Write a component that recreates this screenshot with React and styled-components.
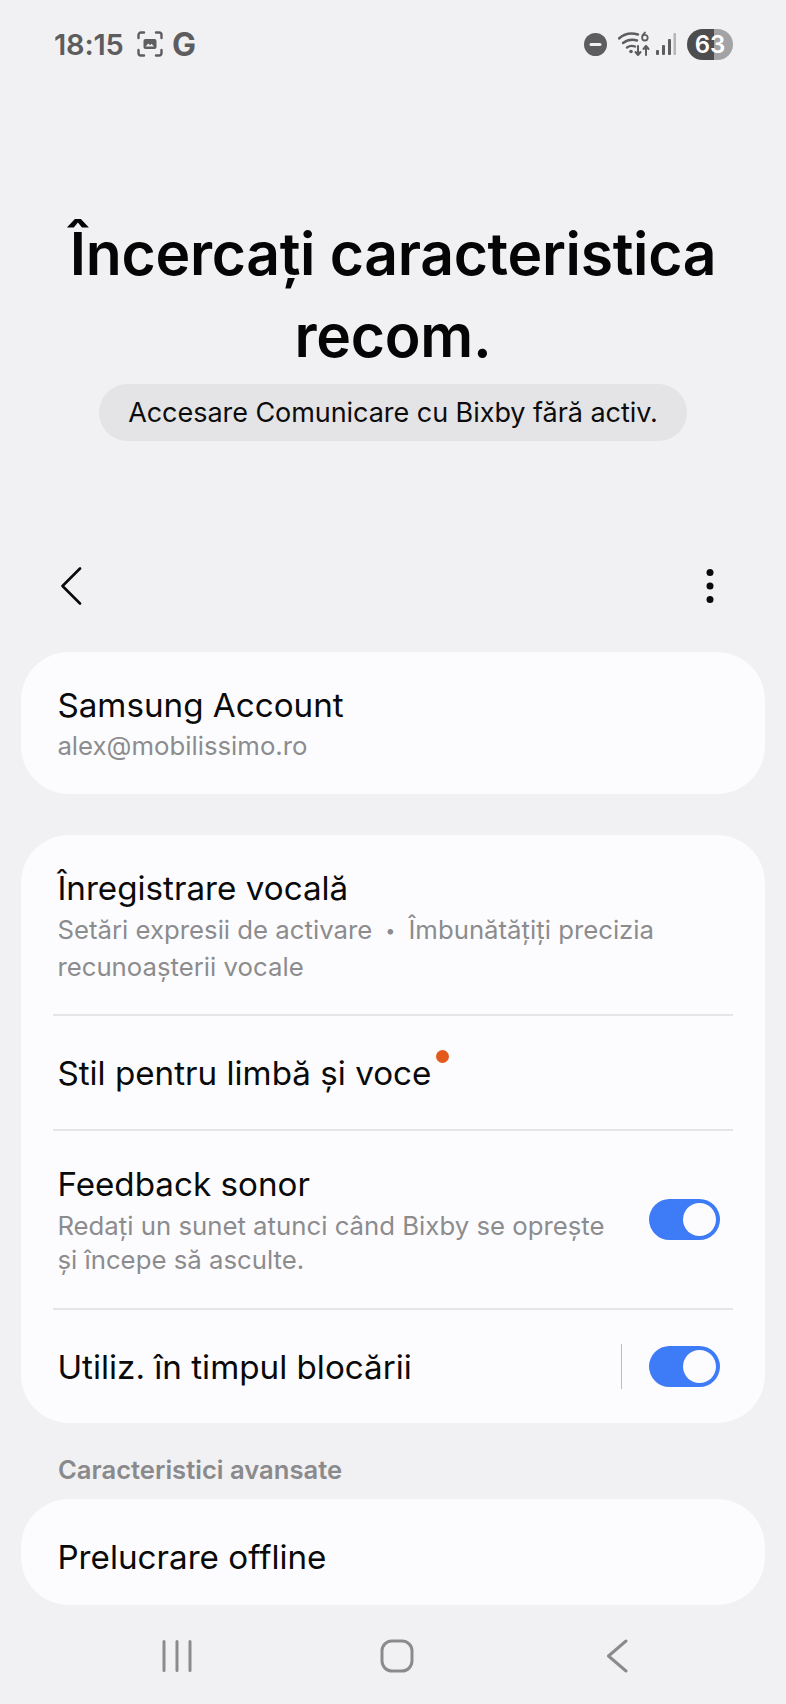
import React from "react";
import styled, { createGlobalStyle } from "styled-components";

const Global = createGlobalStyle`
  html, body { margin: 0; padding: 0; background: #f1f1f3; }
  body { font-family: "Inter", "Noto Sans", sans-serif; }
  * { box-sizing: border-box; }
`;

const Screen = styled.div`
  width: 786px;
  height: 1704px;
  overflow: hidden;
  background: #f1f1f3;
  display: flex;
  flex-direction: column;
`;

const StatusBar = styled.div`
  height: 88px;
  padding: 0 53px 0 54px;
  display: flex;
  align-items: center;
  color: #5d5d60;
`;
const Time = styled.span`
  font-size: 29px;
  font-weight: 600;
  letter-spacing: -0.2px;
  width: 83px;
`;
const GLetter = styled.span`
  font-size: 32px;
  font-weight: 700;
  margin-left: 9px;
`;
const Spacer = styled.div`
  flex: 1;
`;
const Battery = styled.div`
  width: 46px;
  height: 31px;
  border-radius: 16px;
  margin-left: 11px;
  background: linear-gradient(90deg, #4d4d50 0 27px, #a3a3a5 27px);
  color: #fff;
  font-size: 24px;
  font-weight: 600;
  display: flex;
  align-items: center;
  justify-content: center;
`;

const Hero = styled.div`
  padding-top: 125px;
  display: flex;
  flex-direction: column;
  align-items: center;
`;
const Title = styled.h1`
  margin: 0;
  font-size: 58.8px;
  line-height: 82px;
  font-weight: 600;
  color: #050505;
  text-align: center;
  letter-spacing: -0.3px;
`;
const Pill = styled.div`
  margin-top: 7px;
  width: 588px;
  height: 57px;
  border-radius: 29px;
  background: #e4e4e6;
  color: #0c0c0c;
  font-size: 27px;
  letter-spacing: -0.05px;
  display: flex;
  align-items: center;
  justify-content: center;
`;

const ActionBar = styled.div`
  margin-top: 119px;
  height: 52px;
  padding: 0 72px 0 60px;
  display: flex;
  align-items: center;
  justify-content: space-between;
`;

const Card = styled.div`
  margin: ${(p) => p.$top}px 21px 0;
  background: #fcfcfe;
  border-radius: 48px;
  display: flex;
  flex-direction: column;
`;
const Row = styled.div`
  margin: 0 32px;
  padding: ${(p) => p.$pt || 0}px 13px 0 4.400px;
  height: ${(p) => p.$h}px;
  display: flex;
  align-items: center;
  justify-content: space-between;
  border-top: ${(p) => (p.$divider ? "2px solid #e5e5e7" : "none")};
`;
const RowText = styled.div`
  display: flex;
  flex-direction: column;
  gap: ${(p) => p.$gap ?? 5}px;
  padding-top: ${(p) => p.$pt}px;
`;
const RowTitle = styled.div`
  font-size: 33.2px;
  line-height: 40px;
  color: #0a0a0a;
  position: relative;
  width: fit-content;
`;
const RowSub = styled.div`
  font-size: 25.75px;
  line-height: 34.5px;
  color: #8c8c8e;
`;
const Separator = styled.span`
  font-size: 18px;
  margin: 0 13px;
  position: relative;
  top: -2px;
`;
const Badge = styled.span`
  position: absolute;
  right: -18px;
  top: -3px;
  width: 13px;
  height: 13px;
  border-radius: 50%;
  background: #e35b1c;
`;
const Controls = styled.div`
  display: flex;
  align-items: center;
`;
const VLine = styled.div`
  width: 1px;
  height: 45px;
  background: #bdbdbf;
  margin-right: 27px;
`;
const Toggle = styled.div`
  width: 71px;
  height: 41px;
  border-radius: 21px;
  background: #3e7bf6;
  display: flex;
  align-items: center;
  justify-content: flex-end;
  padding-right: 4px;
  flex: none;
`;
const Knob = styled.div`
  width: 33px;
  height: 33px;
  border-radius: 50%;
  background: #fcfcfe;
`;
const SectionLabel = styled.div`
  margin: 32px 0 0 58px;
  font-size: 25.6px;
  line-height: 30px;
  font-weight: 600;
  color: #8a8a8c;
`;

const NavBar = styled.div`
  flex: 1;
  padding: 2px 59px 0 67px;
  display: grid;
  grid-template-columns: repeat(3, 1fr);
  align-items: center;
  justify-items: center;
`;

const ScreenshotIcon = () => (
  <svg width="26" height="26" viewBox="0 0 26 26" fill="none">
    <path d="M1.5 7V4a2.5 2.5 0 0 1 2.5-2.5h3M19 1.500h3A2.500 2.500 0 0 1 24.500 4v3M24.500 19v3a2.500 2.500 0 0 1-2.500 2.500h-3M7 24.500H4A2.500 2.500 0 0 1 1.500 22v-3" stroke="#5d5d60" strokeWidth="2.400" strokeLinecap="round" />
    <rect x="6.500" y="8" width="13" height="10" rx="2" fill="#5d5d60" />
    <path d="M8.500 15.500l2.800-3 1.800 1.800 1.500-1.500 2.400 2.700z" fill="#f1f1f3" />
  </svg>
);
const DndIcon = () => (
  <svg width="23" height="23" viewBox="0 0 23 23">
    <circle cx="11.500" cy="11.500" r="11.500" fill="#5d5d60" />
    <rect x="5.500" y="10" width="12" height="3" rx="1.500" fill="#f1f1f3" />
  </svg>
);
const WifiIcon = () => (
  <svg width="34" height="26" viewBox="0 0 34 26" fill="none" style={{ marginLeft: 11 }}>
    <path d="M1 7.500C6 3 13 1.500 20 3.500" stroke="#5d5d60" strokeWidth="2.400" strokeLinecap="round" />
    <path d="M5 12c4-3 9-4 14-2.500" stroke="#5d5d60" strokeWidth="2.400" strokeLinecap="round" />
    <path d="M9 16.500c2.500-1.800 5.500-2 8-1" stroke="#5d5d60" strokeWidth="2.400" strokeLinecap="round" />
    <circle cx="13" cy="20.500" r="1.800" fill="#5d5d60" />
    <path d="M20 15v9M17.500 21l2.500 3 2.500-3M28 24v-9M25.500 18l2.500-3 2.500 3" stroke="#5d5d60" strokeWidth="2" strokeLinecap="round" strokeLinejoin="round" />
    <path d="M27 1.500c-1.800 1.500-2.900 3.300-2.900 5.200a2.800 2.800 0 1 0 2.800-2.800c-1.200 0-2.200.6-2.700 1.600" stroke="#5d5d60" strokeWidth="1.800" strokeLinecap="round" />
  </svg>
);
const SignalIcon = () => (
  <svg width="20" height="22" viewBox="0 0 20 22" style={{ marginLeft: 4 }}>
    <rect x="0" y="17" width="3" height="5" rx="1" fill="#5d5d60" />
    <rect x="6" y="12" width="3" height="10" rx="1" fill="#5d5d60" />
    <rect x="12" y="6" width="3" height="16" rx="1" fill="#5d5d60" />
    <rect x="17.500" y="0" width="2.500" height="22" rx="1" fill="#b5b5b7" />
  </svg>
);
const BackIcon = () => (
  <svg width="22" height="38" viewBox="0 0 22 38" fill="none">
    <path d="M20 1.500L2.500 19 20 36.500" stroke="#0a0a0a" strokeWidth="2.600" strokeLinecap="round" strokeLinejoin="round" />
  </svg>
);
const MoreIcon = () => (
  <svg width="8" height="36" viewBox="0 0 8 36">
    <circle cx="4" cy="4.500" r="3.500" fill="#0a0a0a" />
    <circle cx="4" cy="18" r="3.500" fill="#0a0a0a" />
    <circle cx="4" cy="31.500" r="3.500" fill="#0a0a0a" />
  </svg>
);
const NavRecents = () => (
  <svg width="30" height="32" viewBox="0 0 30 32" fill="none">
    <path d="M2 1.500v29M15 1.500v29M28 1.500v29" stroke="#8b8b8d" strokeWidth="3" strokeLinecap="round" />
  </svg>
);
const NavHome = () => (
  <svg width="34" height="34" viewBox="0 0 34 34" fill="none">
    <rect x="2" y="2" width="30" height="30" rx="10" stroke="#8b8b8d" strokeWidth="3" />
  </svg>
);
const NavBack = () => (
  <svg width="22" height="34" viewBox="0 0 22 34" fill="none">
    <path d="M20 2L2.500 17 20 32" stroke="#8b8b8d" strokeWidth="3" strokeLinecap="round" strokeLinejoin="round" />
  </svg>
);

const Switch = () => (
  <Toggle>
    <Knob />
  </Toggle>
);

export default function App() {
  return (
    <Screen>
      <Global />
      <StatusBar>
        <Time>18:15</Time>
        <ScreenshotIcon />
        <GLetter>G</GLetter>
        <Spacer />
        <DndIcon />
        <WifiIcon />
        <SignalIcon />
        <Battery>63</Battery>
      </StatusBar>
      <Hero>
        <Title>
          Încercați caracteristica
          <br />
          recom.
        </Title>
        <Pill>Accesare Comunicare cu Bixby fără activ.</Pill>
      </Hero>
      <ActionBar>
        <BackIcon />
        <MoreIcon />
      </ActionBar>
      <Card $top={40}>
        <Row $h={142}>
          <RowText $pt={3} $gap={4}>
            <RowTitle>Samsung Account</RowTitle>
            <RowSub>alex@mobilissimo.ro</RowSub>
          </RowText>
        </Row>
      </Card>
      <Card $top={41}>
        <Row $h={179}>
          <RowText $pt={3}>
            <RowTitle>Înregistrare vocală</RowTitle>
            <RowSub>
              Setări expresii de activare<Separator>•</Separator>Îmbunătățiți precizia
              <br />
              recunoașterii vocale
            </RowSub>
          </RowText>
        </Row>
        <Row $h={115} $divider>
          <RowTitle>
            Stil pentru limbă și voce
            <Badge />
          </RowTitle>
        </Row>
        <Row $h={179} $divider>
          <RowText $pt={2}>
            <RowTitle>Feedback sonor</RowTitle>
            <RowSub>
              Redați un sunet atunci când Bixby se oprește
              <br />
              și începe să asculte.
            </RowSub>
          </RowText>
          <Switch />
        </Row>
        <Row $h={115} $divider>
          <RowTitle>Utiliz. în timpul blocării</RowTitle>
          <Controls>
            <VLine />
            <Switch />
          </Controls>
        </Row>
      </Card>
      <SectionLabel>Caracteristici avansate</SectionLabel>
      <Card $top={14}>
        <Row $h={106} $pt={10}>
          <RowTitle>Prelucrare offline</RowTitle>
        </Row>
      </Card>
      <NavBar>
        <NavRecents />
        <NavHome />
        <NavBack />
      </NavBar>
    </Screen>
  );
}
